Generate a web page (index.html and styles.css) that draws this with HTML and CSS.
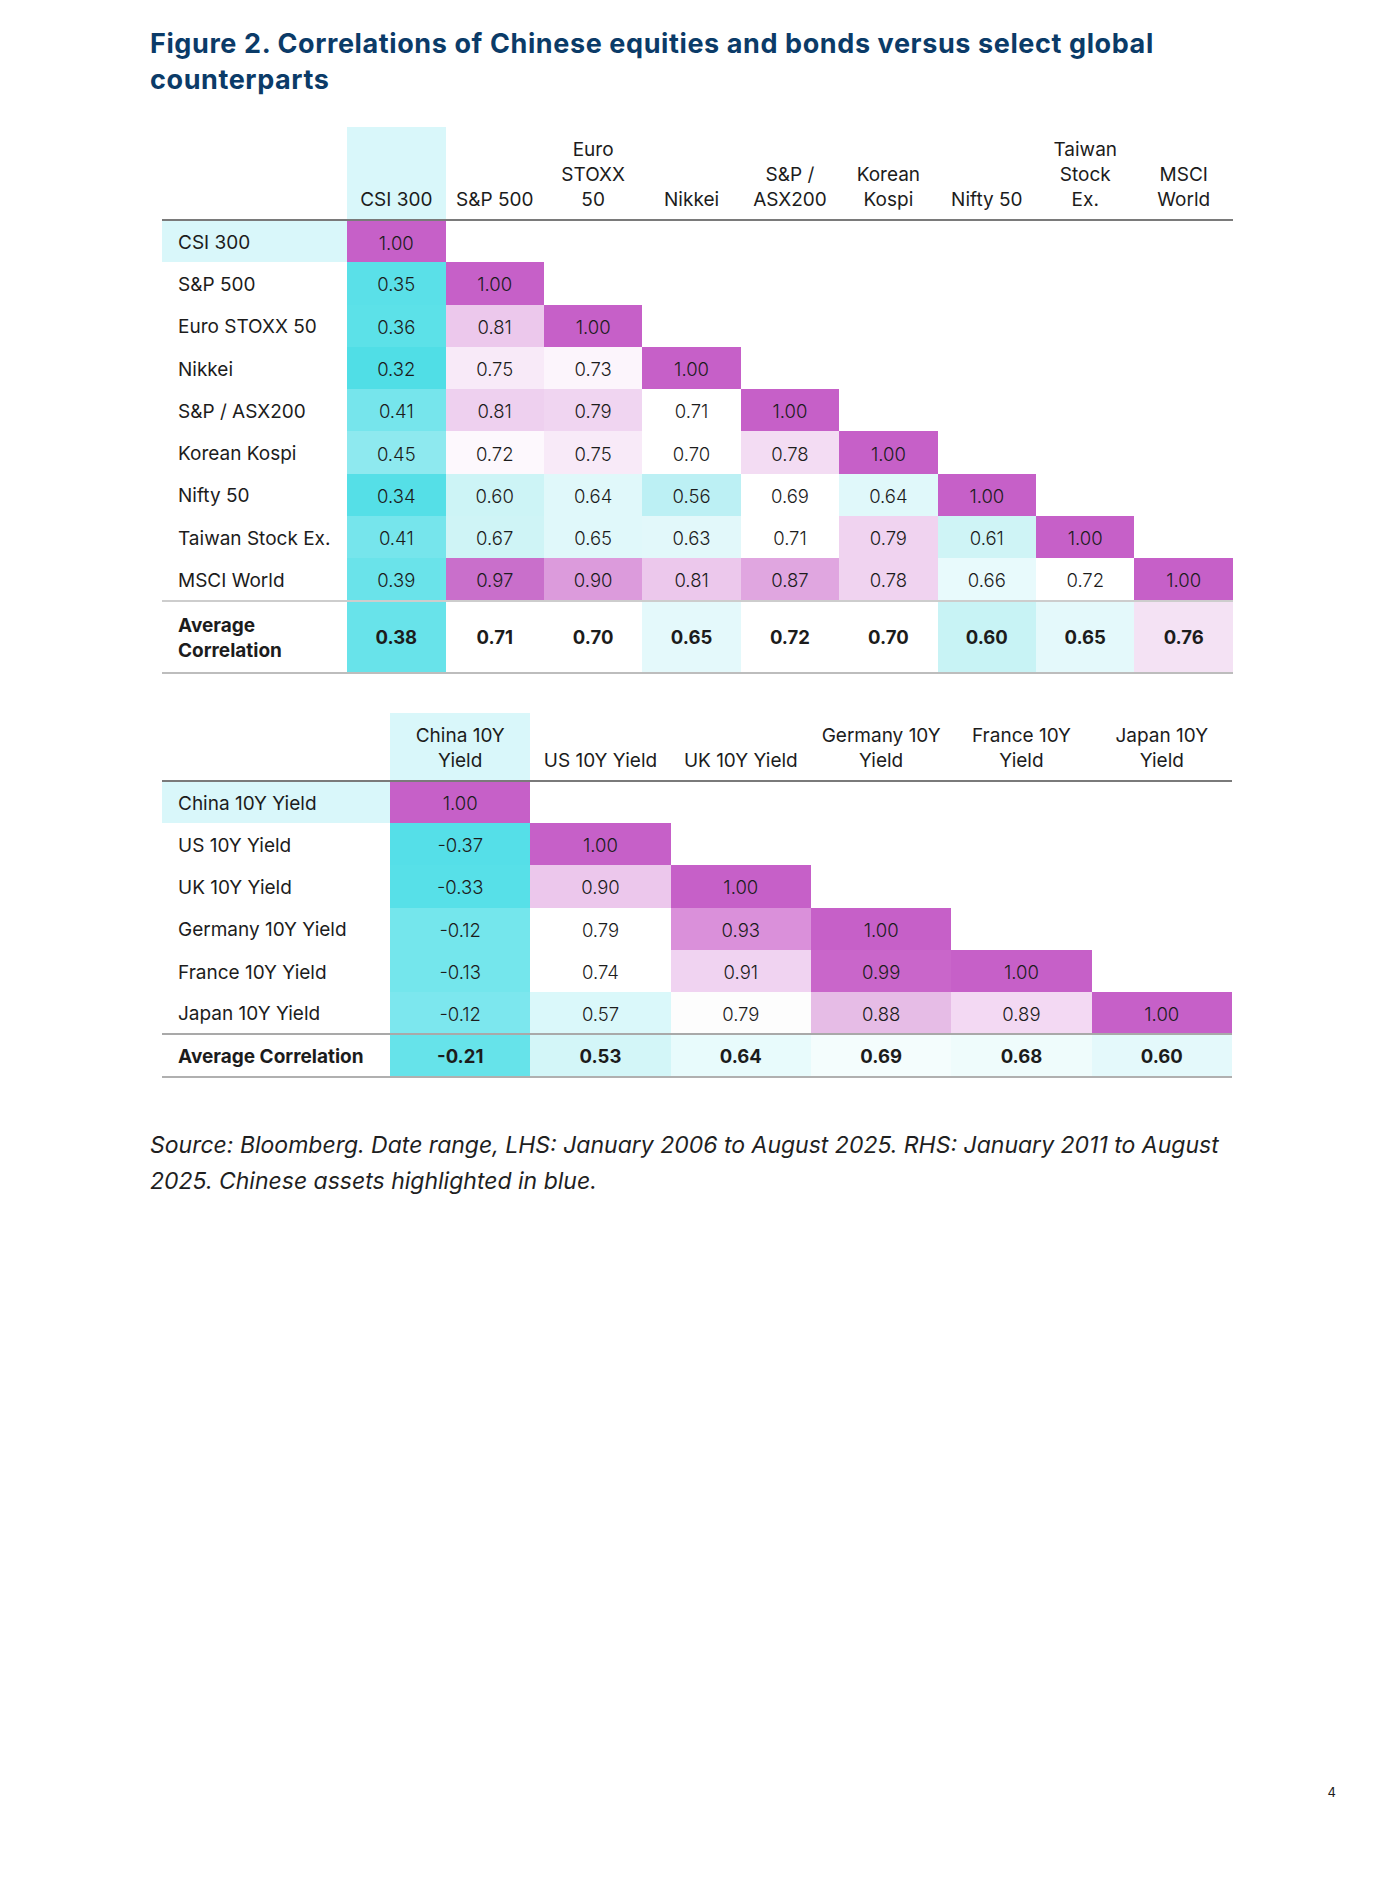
FILE: index.html
```html
<!DOCTYPE html>
<html lang="en">
<head>
    <meta charset="UTF-8">
    <meta name="viewport" content="width=device-width, initial-scale=1.0">
    <title>Figure 2 - Correlations</title>
    <link rel="stylesheet" href="styles.css">
</head>
<body>

<div class="page">
    <h1 class="title">Figure 2. Correlations of Chinese equities and bonds versus select global counterparts</h1>

    <!-- equities -->
    <table class="corr eq">
        <colgroup>
            <col class="label-col">
            <col span="9" class="num-col">
        </colgroup>
        <thead>
            <tr>
                <th></th>
                <th class="hl">CSI 300</th>
                <th>S&amp;P 500</th>
                <th>Euro<br>STOXX<br>50</th>
                <th>Nikkei</th>
                <th>S&amp;P /<br>ASX200</th>
                <th>Korean<br>Kospi</th>
                <th>Nifty 50</th>
                <th>Taiwan<br>Stock<br>Ex.</th>
                <th>MSCI<br>World</th>
            </tr>
        </thead>
        <tbody>
            <tr>
                <td class="label hl">CSI 300</td>
                <td class="one">1.00</td>
                <td></td><td></td><td></td><td></td><td></td><td></td><td></td><td></td>
            </tr>
            <tr>
                <td class="label">S&amp;P 500</td>
                <td style="background:#5ae0e8">0.35</td>
                <td class="one">1.00</td>
                <td></td><td></td><td></td><td></td><td></td><td></td><td></td>
            </tr>
            <tr>
                <td class="label">Euro STOXX 50</td>
                <td style="background:#5ce1e8">0.36</td>
                <td style="background:#ecc8ec">0.81</td>
                <td class="one">1.00</td>
                <td></td><td></td><td></td><td></td><td></td><td></td>
            </tr>
            <tr>
                <td class="label">Nikkei</td>
                <td style="background:#50dee6">0.32</td>
                <td style="background:#f8eaf8">0.75</td>
                <td style="background:#fcf5fc">0.73</td>
                <td class="one">1.00</td>
                <td></td><td></td><td></td><td></td><td></td>
            </tr>
            <tr>
                <td class="label">S&amp;P / ASX200</td>
                <td style="background:#76e5ec">0.41</td>
                <td style="background:#eed0ef">0.81</td>
                <td style="background:#f0d5f1">0.79</td>
                <td>0.71</td>
                <td class="one">1.00</td>
                <td></td><td></td><td></td><td></td>
            </tr>
            <tr>
                <td class="label">Korean Kospi</td>
                <td style="background:#8ee9ef">0.45</td>
                <td style="background:#fdf8fd">0.72</td>
                <td style="background:#f8eaf8">0.75</td>
                <td>0.70</td>
                <td style="background:#f3dcf3">0.78</td>
                <td class="one">1.00</td>
                <td></td><td></td><td></td>
            </tr>
            <tr>
                <td class="label">Nifty 50</td>
                <td style="background:#55dfe7">0.34</td>
                <td style="background:#cdf4f6">0.60</td>
                <td style="background:#e0f8fa">0.64</td>
                <td style="background:#bcf0f4">0.56</td>
                <td>0.69</td>
                <td style="background:#e0f8fa">0.64</td>
                <td class="one">1.00</td>
                <td></td><td></td>
            </tr>
            <tr>
                <td class="label">Taiwan Stock Ex.</td>
                <td style="background:#76e5ec">0.41</td>
                <td style="background:#cff4f6">0.67</td>
                <td style="background:#e0f8fa">0.65</td>
                <td style="background:#e2f8fa">0.63</td>
                <td>0.71</td>
                <td style="background:#f0d3f0">0.79</td>
                <td style="background:#cff4f6">0.61</td>
                <td class="one">1.00</td>
                <td></td>
            </tr>
            <tr>
                <td class="label">MSCI World</td>
                <td style="background:#6ae3ea">0.39</td>
                <td style="background:#c96fcb">0.97</td>
                <td style="background:#dc9bdc">0.90</td>
                <td style="background:#ecc8ec">0.81</td>
                <td style="background:#e0a6e0">0.87</td>
                <td style="background:#f0d3f0">0.78</td>
                <td style="background:#e8fafc">0.66</td>
                <td>0.72</td>
                <td class="one">1.00</td>
            </tr>
            <tr class="avg">
                <td class="label">Average<br>Correlation</td>
                <td style="background:#68e3ea">0.38</td>
                <td>0.71</td>
                <td>0.70</td>
                <td style="background:#e4f9fb">0.65</td>
                <td>0.72</td>
                <td>0.70</td>
                <td style="background:#c8f3f5">0.60</td>
                <td style="background:#e4f9fb">0.65</td>
                <td style="background:#f4e2f4">0.76</td>
            </tr>
        </tbody>
    </table>

    <!-- bonds -->
    <table class="corr bonds">
        <colgroup>
            <col class="label-col">
            <col span="6" class="num-col">
        </colgroup>
        <thead>
            <tr>
                <th></th>
                <th class="hl">China 10Y<br>Yield</th>
                <th>US 10Y Yield</th>
                <th>UK 10Y Yield</th>
                <th>Germany 10Y<br>Yield</th>
                <th>France 10Y<br>Yield</th>
                <th>Japan 10Y<br>Yield</th>
            </tr>
        </thead>
        <tbody>
            <tr>
                <td class="label hl">China 10Y Yield</td>
                <td class="one">1.00</td>
                <td></td><td></td><td></td><td></td><td></td>
            </tr>
            <tr>
                <td class="label">US 10Y Yield</td>
                <td style="background:#55dfe8">-0.37</td>
                <td class="one">1.00</td>
                <td></td><td></td><td></td><td></td>
            </tr>
            <tr>
                <td class="label">UK 10Y Yield</td>
                <td style="background:#57e0e8">-0.33</td>
                <td style="background:#ecc7ec">0.90</td>
                <td class="one">1.00</td>
                <td></td><td></td><td></td>
            </tr>
            <tr>
                <td class="label">Germany 10Y Yield</td>
                <td style="background:#74e6ec">-0.12</td>
                <td>0.79</td>
                <td style="background:#da90da">0.93</td>
                <td class="one">1.00</td>
                <td></td><td></td>
            </tr>
            <tr>
                <td class="label">France 10Y Yield</td>
                <td style="background:#74e6ec">-0.13</td>
                <td>0.74</td>
                <td style="background:#f0d3f1">0.91</td>
                <td style="background:#c966ca">0.99</td>
                <td class="one">1.00</td>
                <td></td>
            </tr>
            <tr>
                <td class="label">Japan 10Y Yield</td>
                <td style="background:#7ce7ee">-0.12</td>
                <td style="background:#daf8fa">0.57</td>
                <td style="background:#fdfdfd">0.79</td>
                <td style="background:#e6bce6">0.88</td>
                <td style="background:#f3d9f3">0.89</td>
                <td class="one">1.00</td>
            </tr>
            <tr class="avg">
                <td class="label">Average Correlation</td>
                <td style="background:#66e3ea">-0.21</td>
                <td style="background:#d3f6f8">0.53</td>
                <td style="background:#e8fbfc">0.64</td>
                <td style="background:#f4fdfd">0.69</td>
                <td style="background:#effcfc">0.68</td>
                <td style="background:#e4f9fb">0.60</td>
            </tr>
        </tbody>
    </table>

    <p class="source">Source: Bloomberg. Date range, LHS: January 2006 to August 2025. RHS: January 2011 to August 2025. Chinese assets highlighted in blue.</p>

    <div class="page-num">4</div>
</div>

</body>
</html>
```

FILE: styles.css
```css
body {
    margin: 0;
    padding: 0;
    font-family: Inter, "Noto Sans", sans-serif;
    color: #1c1c1c;
    background-color: #fff;
}
.page {
    min-height: 1878px;
    box-sizing: border-box;
    padding: 26px 64px 78px 150px;
    display: flex;
    flex-direction: column;
}
.title {
    margin: 0;
    max-width: 1110px;
    font-family: Inter, sans-serif;
    font-size: 27px;
    line-height: 36px;
    font-weight: 700;
    letter-spacing: 0.6px;
    color: #0b3b68;
}
.corr {
    margin-left: 12px;
    border-collapse: collapse;
    table-layout: fixed;
    font-size: 19px;
}
.eq {
    width: 1071px;
    margin-top: 29px;
}
.bonds {
    width: 1070px;
    margin-top: 39px;
}
.eq .label-col {
    width: 185px;
}
.eq .num-col {
    width: 98.4px;
}
.bonds .label-col {
    width: 228px;
}
.bonds .num-col {
    width: 140.3px;
}
.corr th {
    padding: 10px 4px 7px;
    font-weight: 400;
    line-height: 25px;
    text-align: center;
    vertical-align: bottom;
    border-bottom: 2px solid #7a7a7a;
}
.corr td {
    height: 42.3px;
    padding: 2px 4px 0;
    text-align: center;
    font-size: 18.5px;
    font-weight: 300;
    box-sizing: border-box;
}
.corr td.label {
    padding-left: 16px;
    text-align: left;
    font-size: 19px;
    font-weight: 400;
}
.hl {
    background-color: #d9f7fa;
}
.corr td.one {
    background-color: #c660c8;
}
.corr tr.avg td {
    font-weight: 700;
    line-height: 25px;
}
.eq tr.avg td {
    height: 72px;
    border-top: 2px solid #cdcdcd;
    border-bottom: 2px solid #bdbdbd;
}
.bonds tr.avg td {
    border-top: 2px solid #a9a9a9;
    border-bottom: 2px solid #b0b0b0;
}
.source {
    margin: 49px 0 0;
    max-width: 1100px;
    font-size: 23px;
    line-height: 36px;
    font-style: italic;
    color: #1f1f1f;
}
.page-num {
    margin-top: auto;
    text-align: right;
    font-size: 13px;
    line-height: 16px;
}
```
